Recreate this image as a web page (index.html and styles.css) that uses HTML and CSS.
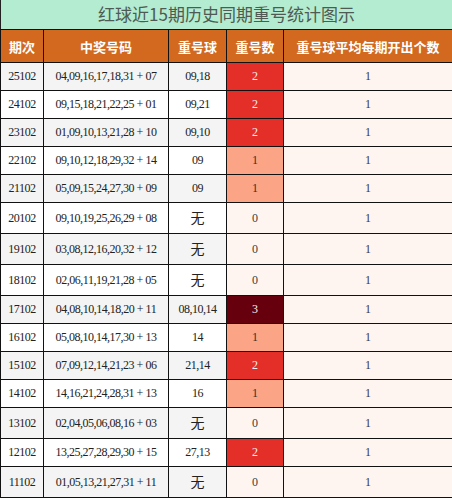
FILE: index.html
```html
<!DOCTYPE html>
<html lang="zh-CN">
<head>
    <meta charset="UTF-8">
    <title>红球近15期历史同期重号统计图示</title>
    <link rel="stylesheet" href="styles.css">
</head>
<body>
    <table class="stats">
        <caption class="title">红球近15期历史同期重号统计图示</caption>
        <colgroup>
            <col class="c-issue">
            <col class="c-nums">
            <col class="c-repeat">
            <col class="c-count">
            <col class="c-avg">
        </colgroup>
        <thead>
            <tr>
                <th>期次</th>
                <th>中奖号码</th>
                <th>重号球</th>
                <th>重号数</th>
                <th>重号球平均每期开出个数</th>
            </tr>
        </thead>
        <tbody>
            <tr class="odd"><td>25102</td><td>04,09,16,17,18,31 + 07</td><td>09,18</td><td class="heat h2">2</td><td class="avg">1</td></tr>
            <tr><td>24102</td><td>09,15,18,21,22,25 + 01</td><td>09,21</td><td class="heat h2">2</td><td class="avg">1</td></tr>
            <tr class="odd"><td>23102</td><td>01,09,10,13,21,28 + 10</td><td>09,10</td><td class="heat h2">2</td><td class="avg">1</td></tr>
            <tr><td>22102</td><td>09,10,12,18,29,32 + 14</td><td>09</td><td class="heat h1">1</td><td class="avg">1</td></tr>
            <tr class="odd"><td>21102</td><td>05,09,15,24,27,30 + 09</td><td>09</td><td class="heat h1">1</td><td class="avg">1</td></tr>
            <tr><td>20102</td><td>09,10,19,25,26,29 + 08</td><td class="none">无</td><td class="heat h0">0</td><td class="avg">1</td></tr>
            <tr class="odd"><td>19102</td><td>03,08,12,16,20,32 + 12</td><td class="none">无</td><td class="heat h0">0</td><td class="avg">1</td></tr>
            <tr><td>18102</td><td>02,06,11,19,21,28 + 05</td><td class="none">无</td><td class="heat h0">0</td><td class="avg">1</td></tr>
            <tr class="odd"><td>17102</td><td>04,08,10,14,18,20 + 11</td><td>08,10,14</td><td class="heat h3">3</td><td class="avg">1</td></tr>
            <tr><td>16102</td><td>05,08,10,14,17,30 + 13</td><td>14</td><td class="heat h1">1</td><td class="avg">1</td></tr>
            <tr class="odd"><td>15102</td><td>07,09,12,14,21,23 + 06</td><td>21,14</td><td class="heat h2">2</td><td class="avg">1</td></tr>
            <tr><td>14102</td><td>14,16,21,24,28,31 + 13</td><td>16</td><td class="heat h1">1</td><td class="avg">1</td></tr>
            <tr class="odd"><td>13102</td><td>02,04,05,06,08,16 + 03</td><td class="none">无</td><td class="heat h0">0</td><td class="avg">1</td></tr>
            <tr><td>12102</td><td>13,25,27,28,29,30 + 15</td><td>27,13</td><td class="heat h2">2</td><td class="avg">1</td></tr>
            <tr class="odd"><td>11102</td><td>01,05,13,21,27,31 + 11</td><td class="none">无</td><td class="heat h0">0</td><td class="avg">1</td></tr>
        </tbody>
    </table>
</body>
</html>
```

FILE: styles.css
```css
* {
    margin: 0;
    padding: 0;
    box-sizing: border-box;
}

body {
    background: #fff;
    font-family: "Liberation Serif", "Noto Sans CJK SC", serif;
}

.stats {
    width: 452px;
    border-collapse: collapse;
    table-layout: fixed;
}

.title {
    background: #b3ecd0;
    color: #4e5a53;
    font-family: "Noto Sans CJK SC", sans-serif;
    font-size: 17px;
    line-height: 28px;
    height: 29px;
    text-align: center;
    border-left: 1px solid #222;
    border-right: 1px solid #222;
}

.c-issue { width: 43px; }
.c-nums { width: 125px; }
.c-repeat { width: 58px; }
.c-count { width: 57px; }
.c-avg { width: 169px; }

th {
    background: #d2691e;
    color: #fff;
    font-family: "Noto Sans CJK SC", sans-serif;
    font-size: 13px;
    font-weight: bold;
    height: 33px;
    border: 1px solid #111;
    white-space: nowrap;
    padding: 0;
}

td {
    border: 1px solid #111;
    text-align: center;
    font-size: 12px;
    letter-spacing: -0.5px;
    line-height: 16px;
    padding: 5px 0 6px;
    color: #222;
    background: #fff;
    white-space: nowrap;
}

tr.odd td {
    background: #f4f4f4;
}

td.none {
    font-family: "Noto Sans CJK SC", sans-serif;
    font-size: 14px;
    letter-spacing: 0;
    line-height: 19px;
}

td.heat,
td.avg {
    letter-spacing: 0;
    color: #3a3a3a;
}

tr td.avg,
tr td.h0 { background: #fff5f0; }
tr td.h1 { background: #fca486; color: #333; }
tr td.h2 { background: #e32f27; color: #f1f1f1; }
tr td.h3 { background: #67000d; color: #f1f1f1; }
```
